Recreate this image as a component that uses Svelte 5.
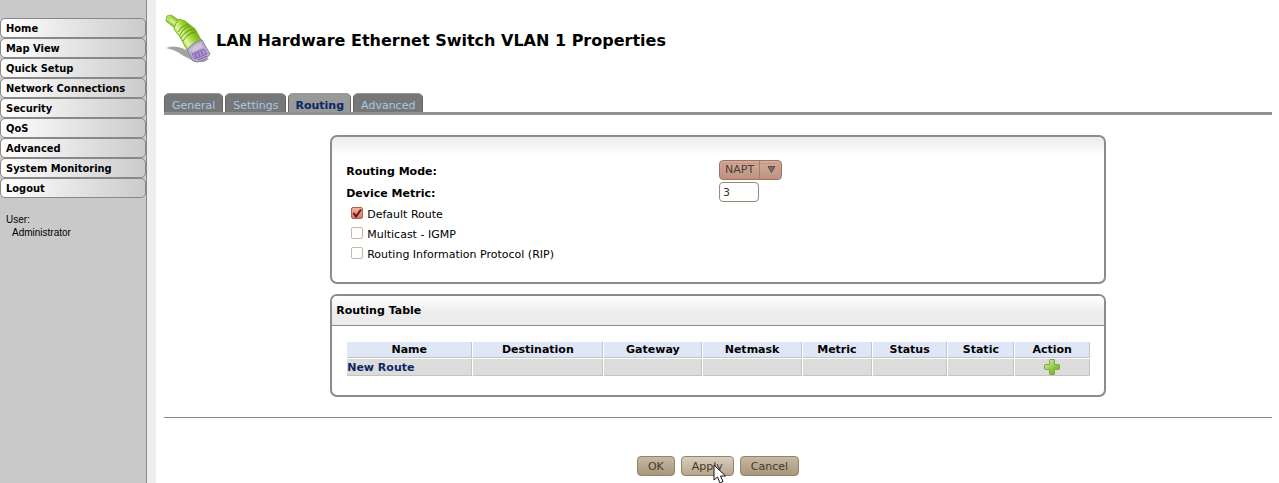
<script>
  const menu = [
    'Home',
    'Map View',
    'Quick Setup',
    'Network Connections',
    'Security',
    'QoS',
    'Advanced',
    'System Monitoring',
    'Logout',
  ];

  const tabs = ['General', 'Settings', 'Routing', 'Advanced'];
  let activeTab = 'Routing';

  // column widths in percent of the routing table
  const columns = [
    { name: 'Name', width: 17 },
    { name: 'Destination', width: 17.7 },
    { name: 'Gateway', width: 13.3 },
    { name: 'Netmask', width: 13.4 },
    { name: 'Metric', width: 9.4 },
    { name: 'Status', width: 10.1 },
    { name: 'Static', width: 9 },
    { name: 'Action', width: 10.1 },
  ];

  let mode = 'NAPT';
  let metric = '3';
  let options = [
    { id: 'default-route', label: 'Default Route', checked: true },
    { id: 'igmp', label: 'Multicast - IGMP', checked: false },
    { id: 'rip', label: 'Routing Information Protocol (RIP)', checked: false },
  ];
</script>

<div class="page">
  <aside>
    <nav>
      {#each menu as item}
        <a href="#menu">{item}</a>
      {/each}
    </nav>
    <div class="user">
      <div>User:</div>
      <div class="user-name">Administrator</div>
    </div>
  </aside>

  <main>
    <header>
      <svg class="plug" viewBox="0 0 48 50" width="48" height="50" aria-hidden="true">
        <defs>
          <linearGradient id="boot" gradientUnits="userSpaceOnUse" x1="13" y1="27" x2="30" y2="15">
            <stop offset="0" stop-color="#7cbb1e" />
            <stop offset="0.35" stop-color="#e3f7a4" />
            <stop offset="0.7" stop-color="#9bd432" />
            <stop offset="1" stop-color="#72b010" />
          </linearGradient>
          <linearGradient id="cable" gradientUnits="userSpaceOnUse" x1="6" y1="11" x2="11" y2="4">
            <stop offset="0" stop-color="#7cbb1e" />
            <stop offset="0.5" stop-color="#dcf597" />
            <stop offset="1" stop-color="#86c31c" />
          </linearGradient>
        </defs>
        <path d="M2 34 Q9 31 18 34 L26 38 45 45 40 48 31 48 18 41 Q12 36 2 34Z" fill="#a3a3a3" />
        <path d="M3 2 L7 1 16 7 11 14 2 7Z" fill="url(#cable)" stroke="#79b022" />
        <ellipse cx="5" cy="4" rx="2" ry="3" transform="rotate(35 5 4)" fill="#b6df58" />
        <path d="M15 5 L21 7 31 15 36 24 38 27 Q29 28 23 36 L16 23 10 15 Q11 9 15 5Z" fill="url(#boot)" stroke="#79b022" />
        <path d="M14 18 Q17 12 24 10M16 21 Q19 14 26 12M17 24 Q21 17 29 15M19 27 Q23 20 31 18" fill="none" stroke="#5c9618" />
        <path d="M23 36 Q29 28 38 26 L46 40 42 45 34 48 29 47Z" fill="#bcabcc" stroke="#8d7f9c" />
        <path d="M26 36 Q31 30 37 29 L39 33 29 38Z" fill="#cfc3d9" />
        <path d="M28 40 L40 35 43 40 31 45Z" fill="#ab8fd0" stroke="#8a68ba" />
        <path d="M31 39l2 5M34 38l2 5M37 37l2 4M34 46l9-4" fill="none" stroke="#7d5db0" />
      </svg>
      <h1>LAN Hardware Ethernet Switch VLAN 1 Properties</h1>
    </header>

    <div class="tabs">
      {#each tabs as tab}
        <a href="#tab" class:active={tab === activeTab} on:click={() => (activeTab = tab)}>{tab}</a>
      {/each}
    </div>

    <section class="panel settings">
      <div class="row">
        <label for="mode">Routing Mode:</label>
        <div class="select">
          <select id="mode" bind:value={mode}>
            <option>NAPT</option>
          </select>
          <svg viewBox="0 0 63 20" width="63" height="20" aria-hidden="true">
            <rect x="3.5" y="3.5" width="56" height="13" rx="1" fill="none" stroke="#d98b75" />
            <path d="M40.5 1v18" stroke="#a87c69" />
            <path d="M49 6.5h7l-3.5 6z" fill="#7d6d63" stroke="#5b4d46" />
          </svg>
        </div>
      </div>
      <div class="row">
        <label for="metric">Device Metric:</label>
        <input id="metric" class="metric" type="text" bind:value={metric} />
      </div>
      {#each options as option}
        <div class="check">
          <span class="tick">
            <input id={option.id} type="checkbox" bind:checked={option.checked} />
            {#if option.checked}
              <svg viewBox="0 0 12 12" width="12" height="12" aria-hidden="true">
                <path d="M2.500 6l2.500 3.500 5-7" fill="none" stroke="#3d2b25" stroke-width="2" />
              </svg>
            {/if}
          </span>
          <label for={option.id}>{option.label}</label>
        </div>
      {/each}
    </section>

    <section class="panel">
      <h2>Routing Table</h2>
      <table>
        <thead>
          <tr>
            {#each columns as column}
              <th style="width: {column.width}%">{column.name}</th>
            {/each}
          </tr>
        </thead>
        <tbody>
          <tr>
            <td><a href="#new">New Route</a></td>
            {#each columns.slice(2) as column}
              <td></td>
            {/each}
            <td class="action">
              <a href="#new" aria-label="Add route">
                <svg viewBox="0 0 16 16" width="16" height="16">
                  <defs>
                    <linearGradient id="plus" x1="0" y1="0" x2="1" y2="1">
                      <stop offset="0.1" stop-color="#d3edaa" />
                      <stop offset="0.6" stop-color="#8ac43f" />
                      <stop offset="1" stop-color="#69a72a" />
                    </linearGradient>
                  </defs>
                  <path d="M6 .5h4l.5.5v4.500h4.500l.5.5v4l-.5.5h-4.500v4.500l-.5.5h-4l-.5-.5v-4.500h-4.500l-.5-.5v-4l.5-.5h4.500v-4.500z" fill="url(#plus)" stroke="#78ac3f" />
                </svg>
              </a>
            </td>
          </tr>
        </tbody>
      </table>
    </section>

    <hr />

    <div class="buttons">
      <button type="button">OK</button>
      <button type="button" class="hover">
        Apply
        <svg class="pointer" viewBox="0 0 14 20" width="14" height="20" aria-hidden="true">
          <path d="M1 1v15l3.500-3 2.500 6 3-1.500-2.500-5.500h5z" fill="#fff" stroke="#111" />
        </svg>
      </button>
      <button type="button">Cancel</button>
    </div>
  </main>
</div>

<style>
:global(body) {
  margin: 0;
  background: #fff;
}

.page {
  display: flex;
  min-height: 100vh;
  font-family: 'DejaVu Sans', Verdana, sans-serif;
  font-size: 11px;
  line-height: 14px;
  color: #000;
}

a {
  text-decoration: none;
}

svg {
  display: block;
}

aside {
  box-sizing: border-box;
  flex: none;
  width: 156px;
  padding-top: 18px;
  background: linear-gradient(to right, #c9c9c9 146px, #888 146px, #888 147px, #eee 147px);
}

nav {
  display: flex;
  flex-direction: column;
  width: 146px;
}

nav a {
  padding: 3px 5px 1px;
  border: 1px solid #888;
  border-radius: 5px;
  background: linear-gradient(to right, #fff, #cbcbcb);
  font-family: 'DejaVu Sans Condensed', 'DejaVu Sans', Tahoma, sans-serif;
  font-weight: bold;
  color: #000;
}

.user {
  padding: 15px 6px;
  font-family: 'Liberation Sans', Arial, sans-serif;
  font-size: 10px;
  line-height: 13px;
}

.user-name {
  padding-left: 6px;
}

main {
  flex: 1;
  min-width: 0;
  padding: 14px 7px 7px 8px;
}

header {
  display: flex;
  align-items: center;
  gap: 4px;
}

h1 {
  margin: 0;
  padding-top: 4px;
  font-size: 16px;
  line-height: 20px;
}

.tabs {
  display: flex;
  gap: 2px;
  margin-top: 29px;
  border-bottom: 3px solid #929292;
}

.tabs a {
  padding: 5px 6px 0;
  border: 1px solid #666;
  border-top-color: #999;
  border-bottom: 0;
  border-radius: 5px 5px 0 0;
  background: #777;
  line-height: 13px;
  color: #a5c8ee;
}

.tabs a {
  padding: 5px 7px 0;
}

.tabs a.active {
  padding: 5px 6px 0;
  background: #999;
  font-weight: bold;
  color: #0a2864;
}

.panel {
  box-sizing: border-box;
  width: 70%;
  margin: 10px auto 0;
  border: 2px solid #8c8c8c;
  border-radius: 7px;
  background: #fff;
}

.settings {
  margin-top: 20px;
  padding: 23px 14px 18px;
  background: linear-gradient(#ebebeb, #fff 18px);
}

.row {
  display: grid;
  grid-template-columns: calc(50% + 1px) 1fr;
  align-items: center;
  justify-items: start;
  height: 20px;
  margin-bottom: 2px;
}

.row label {
  padding-top: 3px;
  font-weight: bold;
}

.select {
  position: relative;
}

.select svg {
  position: absolute;
  top: 0;
  left: 0;
  pointer-events: none;
}

select {
  display: block;
  appearance: none;
  box-sizing: border-box;
  width: 63px;
  height: 20px;
  padding: 0 5px;
  border: 1px solid #927967;
  border-radius: 4px;
  background: linear-gradient(#d2ac9d, #bb9281);
  font: inherit;
  color: #4c3c35;
}

.metric {
  box-sizing: border-box;
  width: 40px;
  height: 20px;
  padding: 0 3px;
  border: 1px solid #9a8a73;
  border-radius: 4px;
  background: #fff;
  font: inherit;
  color: #333;
}

.check {
  display: flex;
  align-items: flex-start;
  gap: 4px;
  height: 17px;
  padding: 3px 0 0 5px;
}

.check label {
  padding-top: 1px;
}

.tick {
  position: relative;
}

.tick svg {
  position: absolute;
  top: 0;
  left: 0;
  pointer-events: none;
}

.check input {
  display: block;
  appearance: none;
  box-sizing: border-box;
  width: 12px;
  height: 12px;
  margin: 0;
  border: 1px solid #c4b8ac;
  border-radius: 2px;
  background: #fff;
}

.check input:checked {
  border-color: #b5604d;
  background: linear-gradient(#f7b3a2, #e8705a);
}

h2 {
  margin: 0;
  padding: 8px 4px 7px;
  border-bottom: 1px solid #8c8c8c;
  border-radius: 5px 5px 0 0;
  background: linear-gradient(#fff, #ececec 60%);
  font-size: 11px;
  line-height: 14px;
}

table {
  table-layout: fixed;
  width: calc(100% - 27px);
  margin: 15px 13px 18px 14px;
  border-spacing: 1px;
}

th,
td {
  box-sizing: border-box;
  height: 16px;
  padding: 1px 0 0;
  border: 1px solid #c4c4c4;
  border-width: 0 1px 1px 0;
  line-height: 14px;
}

th {
  background: #dfe6f6;
}

td {
  height: 17px;
  padding-top: 2px;
  background: #dcdcdc;
}

td a {
  font-weight: bold;
  color: #0a2864;
}

td.action {
  padding: 0;
}

.action svg {
  margin: 0 auto;
}

hr {
  margin: 20px 0 0;
  border: 0;
  border-top: 1px solid #888;
}

.buttons {
  display: flex;
  justify-content: center;
  gap: 6px;
  margin-top: 38px;
}

button {
  position: relative;
  height: 20px;
  padding: 1px 10px 0;
  border: 1px solid #94826b;
  border-radius: 4px;
  background: linear-gradient(#c6b8a3, #a9977b);
  font: inherit;
  color: #44392c;
}

button.hover {
  background: linear-gradient(#dacdbd, #b6a68e);
}

.pointer {
  position: absolute;
  top: 7px;
  left: 31px;
}
</style>
